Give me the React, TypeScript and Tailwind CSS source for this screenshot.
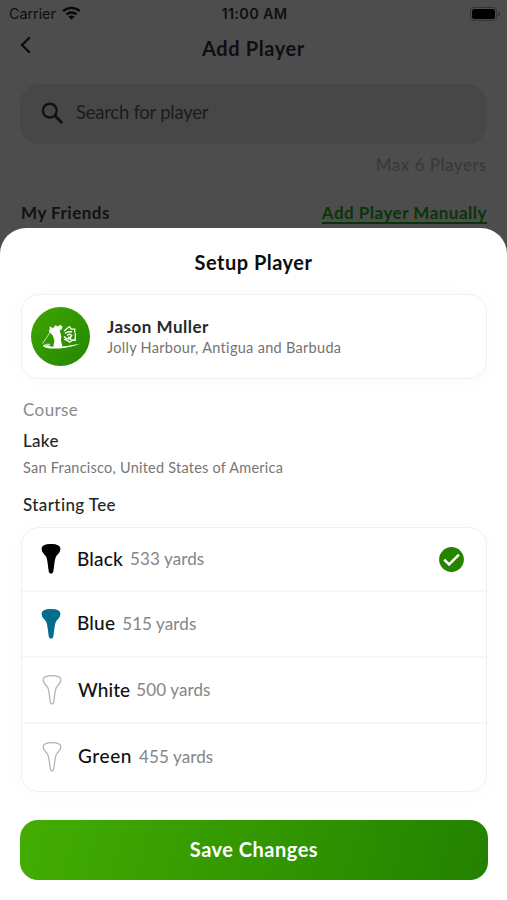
import React, { useState } from 'react';

const tees = [
  { name: 'Black', yards: 533, fill: '#000000', stroke: '#000000', row: 'h-[64px] pl-[18px]', title: 'tracking-[0.2px]', gap: 'ml-[7px]' },
  { name: 'Blue', yards: 515, fill: '#036d8e', stroke: '#036d8e', row: 'h-[66px] pl-[18px] pb-px', title: 'tracking-[0.2px]', gap: 'ml-[7px]' },
  { name: 'White', yards: 500, fill: '#ffffff', stroke: '#b4b4b4', row: 'h-[66px] pl-[19px]', title: 'tracking-[0.1px]', gap: 'ml-[6px]' },
  { name: 'Green', yards: 455, fill: '#ffffff', stroke: '#b4b4b4', row: 'h-[67px] pl-[19px] pb-[2px]', title: 'tracking-[0.6px]', gap: 'ml-[7px]' },
];

const TeeIcon = ({ fill, stroke }: { fill: string; stroke: string }) => (
  <svg className="w-[22px] h-[32px] shrink-0" viewBox="0 0 22 32" fill={fill} stroke={stroke} strokeWidth="1.3">
    <path
      strokeLinejoin="round"
      d="M11 1.6C16 1.6 19.8 2.4 19.8 6C19.8 9.2 17.2 10.8 15.7 12.8C13.9 15.4 13.7 22 12.7 28.4C12.3 30.5 9.8 30.5 9.4 28.4C8.4 22 8.2 15.4 6.4 12.8C4.9 10.8 2.2 9.2 2.2 6C2.2 2.4 6 1.6 11 1.6Z"
    />
  </svg>
);

const GolferLogo = () => (
  <svg className="w-[59px] h-[59px]" viewBox="0 0 59 59" fill="none">
    <path
      fill="#fff"
      d="M18.6 22.4L18.8 19.2L21.4 21L22.8 20.6L24.2 18.2L27 19.4L29 17.8L31.4 19.6L31 22L28.6 23.6L30.2 28.5L30 33.5L31.4 39.8L27 40.5L22.2 40.2L23.4 33.5L21.8 28.4L18 24.4Z"
    />
    <path stroke="#fff" strokeWidth="0.7" d="M19.6 24.5L11.6 36.6" />
    <path stroke="#fff" strokeWidth="1.3" d="M33 24L38.4 19.6L40.2 22L43.8 22.2L43.6 25.6M44.4 26L44.2 33.2L41.6 33L38.6 35.2L36 33.2L33 32.4" />
    <path stroke="#fff" strokeWidth="1.4" d="M34 26.2L37.6 24.6L41 24.8M36 28.4L38.6 27L40.6 28.4L39.4 30.6L37 30.2M33 29.4L35.4 31.6L40.6 32.2" />
    <path
      fill="#fff"
      d="M12 38.4C15 36.6 17.4 36.4 19.4 37.2L17.6 38.6L20 39.6C29 40.6 40 38.6 49 36.8C42 40 32 41.6 24 41.5C17 41.4 12.6 40.6 12 38.4Z"
    />
    <path stroke="#2f9400" strokeWidth="0.6" d="M14 38.6C16 37.6 17 37.6 18 38" />
  </svg>
);

export default function App() {
  const [selected, setSelected] = useState('Black');

  return (
    <div className="w-[507px] h-[900px] overflow-hidden bg-[#4d4d4d] font-['Lato',sans-serif] flex flex-col whitespace-nowrap">
      {/* Status bar */}
      <div className="h-[28px] shrink-0 grid grid-cols-3 items-center pl-[9px] pr-[7px] font-['Inter',sans-serif] text-[14.5px] text-[#101010]">
        <div className="flex items-center gap-[6px]">
          <span className="tracking-[-0.1px]">Carrier</span>
          <svg className="w-[19px] h-[14px] -mt-[2px]" viewBox="0 0 19 14" fill="none" stroke="#080808" strokeWidth="2.4">
            <path d="M1.2 5.2C5.8 0.7 13.2 0.7 17.8 5.2" />
            <path d="M4.4 8.5C7.2 5.8 11.8 5.8 14.6 8.5" />
            <path fill="#080808" stroke="none" d="M6.4 10.5C8.2 9 10.8 9 12.6 10.5L9.5 13.7Z" />
          </svg>
        </div>
        <span className="text-center font-semibold tracking-[0.3px]">11:00 AM</span>
        <div className="flex items-center justify-end gap-[1px] -mt-[1px]">
          <div className="w-[27px] h-[14px] rounded-[4px] border border-[#343434] p-[1px]">
            <div className="h-full rounded-[2.5px] bg-black" />
          </div>
          <div className="w-[2px] h-[4px] rounded-r-full bg-[#343434]" />
        </div>
      </div>

      {/* Header */}
      <div className="h-[40px] shrink-0 grid grid-cols-[40px_1fr_40px] items-center px-[20px]">
        <svg className="w-[11px] h-[18px] mb-[6px]" viewBox="0 0 11 18" fill="none" stroke="#0c0c0c" strokeWidth="2.2">
          <path d="M9.8 1.4L2 9L9.8 16.6" />
        </svg>
        <h1 className="text-center text-[20px] font-bold text-[#0e0f10] tracking-[0.6px]">Add Player</h1>
      </div>

      {/* Search */}
      <div className="mx-[20px] mt-[16px] h-[60px] shrink-0 rounded-[20px] bg-[#474747] flex items-center pl-[21px] gap-[12px]">
        <svg className="w-[23px] h-[23px] -mt-[2px]" viewBox="0 0 23 23" fill="none" stroke="#0f1213" strokeWidth="2.4">
          <circle cx="8.8" cy="8.6" r="6.9" />
          <path strokeWidth="2.9" d="M13.8 13.6L21.2 21" />
        </svg>
        <span className="text-[18.5px] -mt-[2px] text-[#1a1c1d] tracking-[-0.25px]">Search for player</span>
      </div>

      <div className="h-[42px] shrink-0 px-[20px] flex items-center justify-end text-[17px] font-medium text-[#393939] tracking-[0.5px]">
        Max 6 Players
      </div>
      <div className="h-[42px] shrink-0 px-[20px] pt-[12px] flex items-center justify-between text-[17px] font-bold">
        <span className="text-[#101213] tracking-[0.5px] pl-[1px]">My Friends</span>
        <a className="text-[#093509] border-b-2 border-[#093509] leading-[18px] mt-[1px] tracking-[0.5px]">Add Player Manually</a>
      </div>

      {/* Bottom sheet */}
      <div className="h-[672px] shrink-0 rounded-t-[26px] bg-white px-[21px] flex flex-col">
        <h2 className="h-[66px] pt-[2px] flex items-center justify-center text-[20px] font-bold text-[#0c0d0e] tracking-[0.5px]">
          Setup Player
        </h2>

        <div className="h-[85px] w-[466px] rounded-[18px] border border-[#f0f0f0] shadow-[0_2px_24px_rgba(0,0,0,0.025)] flex items-center pl-[9px]">
          <div className="w-[59px] h-[59px] rounded-full bg-linear-to-br from-[#3fa602] to-[#248600]">
            <GolferLogo />
          </div>
          <div className="ml-[17px] flex flex-col">
            <span className="text-[17px] leading-[22px] font-bold text-[#26292a] tracking-[0.5px]">Jason Muller</span>
            <span className="text-[14.5px] leading-[20px] text-[#737373] tracking-[0.3px]">Jolly Harbour, Antigua and Barbuda</span>
          </div>
        </div>

        <div className="pl-[2px] pt-[18px] flex flex-col">
          <span className="h-[26px] leading-[25px] text-[17px] text-[#8b8b8b] tracking-[0.4px]">Course</span>
          <span className="h-[36px] leading-[35px] text-[17px] font-medium text-[#222526] tracking-[0.3px]">Lake</span>
          <span className="h-[20px] leading-[18px] text-[14.5px] text-[#777] tracking-[0.23px]">San Francisco, United States of America</span>
          <span className="h-[48px] pt-[6px] leading-[40px] text-[17px] font-medium text-[#222526] tracking-[0.4px]">Starting Tee</span>
        </div>

        <div className="w-[466px] h-[265px] shrink-0 rounded-[18px] border border-[#efefef] shadow-[0_2px_24px_rgba(0,0,0,0.025)] divide-y-2 divide-[#f6f6f6] overflow-hidden">
          {tees.map((tee) => (
            <div key={tee.name} onClick={() => setSelected(tee.name)} className={`${tee.row} flex items-center pr-[22px] cursor-pointer`}>
              <TeeIcon fill={tee.fill} stroke={tee.stroke} />
              <span className={`${tee.title} ml-[15px] text-[19px] font-medium text-[#111]`}>{tee.name}</span>
              <span className={`${tee.gap} text-[17px] text-[#858585] tracking-[0.1px]`}>{tee.yards} yards</span>
              {selected === tee.name && (
                <svg className="ml-auto w-[25px] h-[25px]" viewBox="0 0 25 25" fill="none">
                  <circle cx="12.5" cy="12.5" r="12.4" fill="#258500" />
                  <path d="M5.2 12.6L10.1 17.4L19.9 7.6" stroke="#fff" strokeWidth="2.5" />
                </svg>
              )}
            </div>
          ))}
        </div>

        <button className="mt-[28px] -ml-[1px] w-[468px] h-[60px] pb-[3px] shrink-0 rounded-[18px] bg-linear-[105deg] from-[#43ad02] to-[#238100] text-white text-[20px] font-bold tracking-[0.5px]">
          Save Changes
        </button>
      </div>
    </div>
  );
}
